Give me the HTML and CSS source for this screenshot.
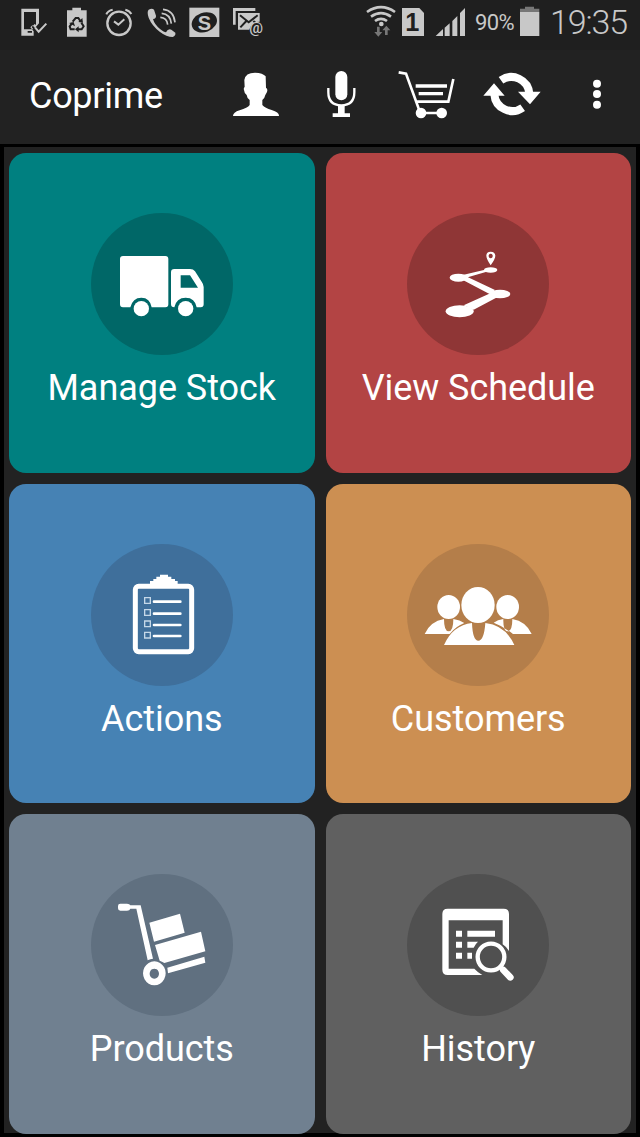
FILE: index.html
```html
<!DOCTYPE html>
<html lang="en">
<head>
<meta charset="utf-8">
<title>Coprime</title>
<link rel="stylesheet" href="styles.css">
</head>
<body>
<div class="screen">
  <header class="statusbar">
    <div class="notifications">
      <svg width="56" height="50" viewBox="0 0 168 150"><path fill-rule="evenodd" d="M64 26h53v44l-12 14-8-8-6 6 10 12v13H64zM72 36v52h28l-5-7 9-9 4 3V36zM83 93v5h13v-5z"/><path class="line w6" d="M105 82l11 13 23-24"/></svg>
      <svg width="40" height="50" viewBox="168 0 120 150"><path d="M201 31h16v-8h26v8h17v79h-59z"/><g class="cut w6"><path d="M218 65l9-11h8l6 9M244 68l7 11-6 9h-12M224 88h-12l-3-9 7-9"/></g><path class="dark" d="M235 66l14 2-2-14zM236 79v18l-11-9zM207 69l14-3 4 13z"/></svg>
      <svg width="44" height="50" viewBox="288 0 132 150"><circle class="line w7" cx="357" cy="70" r="35"/><path class="line w6" d="M342 64l13 10 18-16M319 43q4-11 19-14M376 29q13 3 18 13"/></svg>
      <svg width="43" height="50" viewBox="420 0 129 150"><path d="M446 29q10-5 16 0l6 18q1 8-9 10 4 16 22 31 11 9 17 9 6-12 16-8l12 9q2 9-8 13-18 0-39-16-24-19-33-42-6-18 0-24z"/><path class="line w5" d="M489 28q32 3 36 39M485 40q26 2 29 31M481 52q20 1 22 22"/></svg>
      <svg width="43" height="50" viewBox="549 0 129 150"><path d="M568 23h90v88h-90z"/><ellipse class="dark" cx="613" cy="67" rx="39" ry="29" transform="rotate(-20 613 67)"/><text class="sbadge" x="613" y="89">S</text></svg>
      <svg width="54" height="50" viewBox="678 0 162 150"><path d="M699 24h67v9h-59v41h-8zM714 39h65v26q-25 0-31 24h-34z"/><path class="cut w6" d="M720 46l26 21 27-21M721 82l18-19M768 70l-8-7"/><text class="at" x="768" y="100">@</text></svg>
    </div>
    <div class="system">
      <svg width="47" height="50" viewBox="3 0 141 150"><path class="line w8" d="M51 36q42-29 84 0M63 50q30-21 60 0M75 63q18-13 36 0"/><circle cx="94" cy="72" r="7"/><path class="dim" d="M81 80h8v16h8l-12 14-12-14h8zM105 105h8V91h8l-12-14-12 14h8z"/></svg>
      <svg width="32" height="50" viewBox="144 0 96 150"><path d="M156 24h52l14 15v69h-66z"/><text class="simno" x="187" y="94">1</text></svg>
      <svg width="40" height="50" viewBox="240 0 120 150"><path d="M257 108l22-21v21zM284 83l15-13v38h-15zM307 63l15-15v60h-15zM330 39l15-15v84h-15z"/></svg>
      <span class="percent">90%</span>
      <svg class="battery" width="24" height="50" viewBox="503 0 72 150"><path class="dim" d="M509 26h15v-6h27v6h16v10h-58z"/><path d="M509 36h58v72h-58z"/></svg>
      <span class="clock">19:35</span>
    </div>
  </header>

  <nav class="appbar">
    <h1 class="title">Coprime</h1>
    <div class="actions">
      <svg width="60" height="94" viewBox="678 0 180 282"><path d="M733 90q3-22 32-22 24 1 32 11l1 34q6 3 3 13l-5 9q-2 10-9 15v15q8 9 28 15 23 7 22 18H699q0-11 20-17 24-7 30-16v-15q-8-5-9-15-7-4-8-15-2-7 2-9z"/></svg>
      <svg class="mic" width="60" height="94" viewBox="-24 0 180 282"><rect x="46" y="63" width="36" height="88" rx="18"/><path class="stroke w7" d="M25 114v13q0 39 39 39t39-39v-13"/><path d="M54 166h20v24h16v11H38v-11h16z"/></svg>
      <svg class="cart" width="80" height="94" viewBox="208 0 240 282"><path class="stroke w8" d="M237 67l22 4 40 110M290 155h96l15-68M304 189h64"/><path class="stroke w10" d="M288 108h94M297 131h73"/><circle cx="304" cy="189" r="16"/><circle cx="366" cy="189" r="16"/></svg>
      <svg class="sync" width="62" height="94" viewBox="480 0 186 282"><path class="stroke w24" d="M543 91A54 54 0 0 1 628 131M608 173A54 54 0 0 1 523 133"/><path d="M594 125h68l-32 38zM490 137l32-37 32 37z"/></svg>
      <svg class="more" width="24" height="94" viewBox="796 0 72 282"><circle cx="832" cy="101" r="12"/><circle cx="832" cy="132" r="12"/><circle cx="832" cy="164" r="12"/></svg>
    </div>
  </nav>

  <main class="grid">
    <a class="tile stock">
      <svg class="badge" viewBox="33 24 426 426"><path d="M129 153h127q9 0 9 9v136q0 9-9 9h-41q-5-29-31-29t-33 29h-22q-9 0-9-9V162q0-9 9-9z"/><path fill-rule="evenodd" d="M283 192h47q10 0 15 7l20 31q6 8 6 16v52q0 9-9 9h-12q-5-29-33-29t-34 29q-10 0-10-10V202q0-10 10-10zm19 19v37h52l-24-37z"/><circle cx="184" cy="311" r="23"/><circle cx="317" cy="311" r="23"/></svg>
      <span class="label">Manage Stock</span>
    </a>
    <a class="tile schedule">
      <svg class="badge" viewBox="36 24 426 426"><path fill-rule="evenodd" d="M287 181q-13-20-13-29 0-12 13-12t14 12q0 9-14 29zM287 146a6 7 0 1 0 .1 0z"/><ellipse cx="287" cy="195" rx="20" ry="8"/><ellipse cx="190" cy="218" rx="26" ry="12"/><ellipse cx="315" cy="267" rx="31" ry="13"/><ellipse cx="194" cy="319" rx="42" ry="18"/><path d="M203 210l67-16 5 6-62 18zM216 215l84 40-15 13-80-42zM286 265l22 11-72 38-30-13z"/></svg>
      <span class="label">View Schedule</span>
    </a>
    <a class="tile tasks">
      <svg class="badge" viewBox="33 27 426 426"><path d="M210 148v-10h10v-6h9v-7h11v-6h24v6h10v7h11v6h8v10z"/><rect class="stroke w15" x="166" y="154" width="169" height="196" rx="10"/><path class="stroke w8 round" d="M222 200h79M222 236h79M222 270h79M222 303h79"/><path class="boxes" d="M194 188h17v17h-17zM194 224h17v17h-17zM194 258h17v17h-17zM194 292h17v17h-17z"/></svg>
      <span class="label">Actions</span>
    </a>
    <a class="tile customers">
      <svg class="badge" viewBox="36 27 426 426"><ellipse cx="161" cy="216" rx="34" ry="36"/><ellipse cx="338" cy="216" rx="34" ry="36"/><ellipse cx="249" cy="210" rx="50" ry="54"/><path d="M89 297q17-38 58-45 0 37 14 37t14-37q20 3 33 12-26 10-44 33zM410 297q-17-38-58-45 0 37-14 37t-13-37q-17 2-29 11 28 10 58 34zM147 330q26-59 84-66 2 53 19 53t21-53q61 7 87 66z"/></svg>
      <span class="label">Customers</span>
    </a>
    <a class="tile products">
      <svg class="badge" viewBox="33 28 426 426"><path d="M121 117h20q8 0 10 5h31l37 160q-8 0-16 5l-34-155h-18q-2 6-10 6h-20q-7 0-7-7v-7q0-7 7-7zM208 174l92-27 14 57-92 27zM225 241l138-40 13 59-123 35q-7-5-14-7zM262 309l111-33 3 18-112 32z"/><path fill-rule="evenodd" d="M223 290a34 36 0 1 0 .1 0zM223 312a14 15 0 1 1-.1 0z"/></svg>
      <span class="label">Products</span>
    </a>
    <a class="tile history">
      <svg class="badge" viewBox="36 28 426 426"><path fill-rule="evenodd" d="M158 132h168q16 0 16 16v111q-8-13-19-20v-72H161v145h77q10 11 24 19H158q-16 0-16-16V148q0-16 16-16z"/><path d="M183 198h18v18h-18zM217 198h83v18h-83zM183 231h18v18h-18zM217 231h32q-8 7-13 18h-19zM183 264h18v18h-18zM217 264h14v18h-14z"/><circle class="stroke w13" cx="288" cy="277" r="40"/><path class="stroke w20 round" d="M325 316l21 22"/><path class="stroke w11" d="M316 306l12 12"/></svg>
      <span class="label">History</span>
    </a>
  </main>
</div>
</body>
</html>
```
FILE: styles.css
```css
* { box-sizing: border-box; }

body {
  margin: 0;
  background: #000;
  font-family: Roboto, "Noto Sans", sans-serif;
}

svg { display: block; flex: none; fill: currentColor; }

.screen {
  width: 640px;
  height: 1137px;
  overflow: hidden;
  display: flex;
  flex-direction: column;
}

.statusbar {
  height: 50px;
  display: flex;
  justify-content: space-between;
  background: #1f1f1f;
  color: #c8c8c8;
}

.notifications, .system { display: flex; }
.system { width: 289px; }

.percent {
  flex: none;
  width: 41px;
  padding-left: 5px;
  font-size: 22px;
  line-height: 46px;
  letter-spacing: -0.6px;
  white-space: nowrap;
}

.battery { margin-left: 7px; }

.clock {
  margin-left: 8px;
  font-size: 34px;
  font-weight: 300;
  line-height: 44px;
  letter-spacing: -1.1px;
}

.sbadge, .simno, .at { text-anchor: middle; font-weight: 700; }
.sbadge { font-family: "Liberation Sans", sans-serif; font-size: 60px; }
.simno { font-family: "Liberation Sans", sans-serif; font-size: 76px; fill: #1f1f1f; }
.at { font-size: 46px; font-weight: 500; }

.dark { fill: #1f1f1f; }
.dim { fill: #777; }
.line, .stroke { fill: none; stroke: currentColor; }
.cut { fill: none; stroke: #1f1f1f; }
.w5 { stroke-width: 5; }
.w6 { stroke-width: 6; }
.w7 { stroke-width: 7; }
.w8 { stroke-width: 8; }
.w10 { stroke-width: 10; }
.w11 { stroke-width: 11; }
.w13 { stroke-width: 13; }
.w15 { stroke-width: 15; }
.w20 { stroke-width: 20; }
.w24 { stroke-width: 24; }
.round { stroke-linecap: round; }
.boxes { fill: none; stroke: #c5d8e8; stroke-width: 4; }

.appbar {
  height: 94px;
  display: flex;
  justify-content: space-between;
  background: #222;
  color: #fff;
  padding: 0 31px 0 29px;
}

.title {
  margin: 0;
  font-size: 36px;
  font-weight: 400;
  line-height: 92px;
  letter-spacing: -0.3px;
}

.actions { display: flex; width: 383px; }
.mic { margin-left: 26px; }
.cart { margin-left: 17px; }
.sync { margin-left: 11px; }
.more { margin-left: 43px; }

.grid {
  flex: none;
  height: 986px;
  margin: 3px 4px 4px;
  padding: 6px 5px 0;
  display: grid;
  grid-template-columns: 1fr 1fr;
  grid-template-rows: repeat(3, 319.5px);
  gap: 11px;
  background: #222;
}

.tile {
  display: flex;
  flex-direction: column;
  align-items: center;
  padding-top: 60px;
  border-radius: 17px;
  color: #fff;
}

.badge { width: 142px; height: 142px; border-radius: 50%; }

.label {
  margin-top: 11px;
  font-size: 36px;
  line-height: 44px;
  letter-spacing: -0.05px;
  white-space: nowrap;
}

.stock { background: #008080; }
.stock .badge { background: #006767; }
.schedule { background: #b34444; }
.schedule .badge { background: #8f3636; }
.tasks { background: #4682b4; }
.tasks .badge { background: #3f6f9b; }
.customers { background: #cc8f52; }
.customers .badge { background: #b47e4a; }
.products { background: #708090; }
.products .badge { background: #607080; }
.history { background: #606060; }
.history .badge { background: #505050; }
```
